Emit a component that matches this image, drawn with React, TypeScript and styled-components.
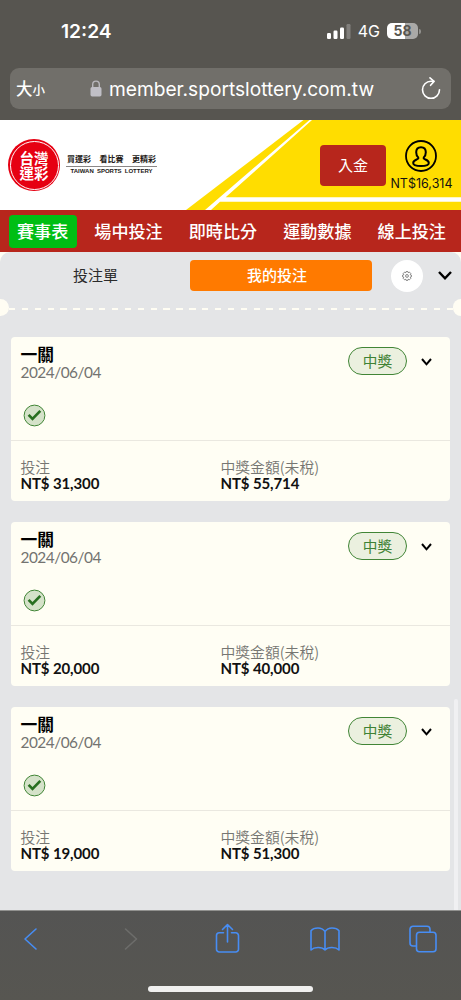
import React from 'react';
import styled, { createGlobalStyle } from 'styled-components';

const CJK = '"Noto Sans CJK TC", sans-serif';

const GlobalStyle = createGlobalStyle`
  *, *::before, *::after { box-sizing: border-box; }
  body { margin: 0; background: #e4e5e7; }
  button { border: 0; padding: 0; margin: 0; background: none; font: inherit; color: inherit; }
  svg { display: block; flex: none; }
`;

const Screen = styled.div`
  width: 461px;
  height: 1000px;
  display: flex;
  flex-direction: column;
  overflow: hidden;
  background: #e4e5e7;
  font-family: Lato, ${CJK};
`;

const BrowserTop = styled.header`
  height: 120px;
  flex: none;
  background: #575550;
  color: #fff;
  padding: 0 10px;
`;

const StatusBar = styled.div`
  height: 68px;
  display: flex;
  align-items: center;
  padding: 0 30px 6px 51px;
  font-family: Inter, sans-serif;
`;

const Clock = styled.span`
  flex: 1;
  font-size: 19.2px;
  font-weight: 600;
`;

const Network = styled.span`
  font-size: 16px;
  margin: 0 7px 0 7px;
`;

const Battery = styled.span`
  width: 31px;
  height: 16px;
  border-radius: 5px;
  background: linear-gradient(90deg, #fff 58%, #aaa9a7 58%);
  color: #575550;
  font-size: 14px;
  font-weight: 700;
  line-height: 16px;
  text-align: center;
`;

const BatteryTip = styled.i`
  width: 2px;
  height: 5px;
  margin-left: 1px;
  border-radius: 0 2px 2px 0;
  background: #92918e;
`;

const AddressBar = styled.div`
  height: 41px;
  border-radius: 9px;
  background: #716f6a;
  display: flex;
  align-items: center;
  padding: 0 10px 0 6px;
`;

const TextSize = styled.span`
  width: 74px;
  font-family: ${CJK};
  font-size: 16.5px;
  font-weight: 500;
  line-height: 24px;
  small { font-size: 12.5px; }
`;

const Url = styled.span`
  flex: 1;
  margin-left: 7px;
  font-family: Inter, sans-serif;
  font-size: 19.15px;
  line-height: 24px;
  white-space: nowrap;
`;

const SiteHeader = styled.div`
  height: 90px;
  flex: none;
  background: #fff;
  position: relative;
`;

const HeaderArt = styled.svg`
  position: absolute;
  inset: 0;
`;

const HeaderRow = styled.div`
  position: relative;
  height: 90px;
  display: flex;
  align-items: center;
  padding: 0 8px;
`;

const Seal = styled.div`
  width: 52px;
  height: 52px;
  border-radius: 50%;
  background: #e60012;
  padding: 1.5px;
`;

const SealRing = styled.div`
  height: 100%;
  border: 1px solid #fff;
  border-radius: 50%;
  display: flex;
  flex-direction: column;
  align-items: center;
  justify-content: center;
  color: #fff;
  font-family: ${CJK};
  font-weight: 700;
  font-size: 14.5px;
  line-height: 15px;
  padding-bottom: 1px;
`;

const Tagline = styled.div`
  width: 91px;
  margin-left: 6px;
  color: #221815;
  white-space: nowrap;
`;

const Slogan = styled.div`
  height: 13px;
  display: flex;
  justify-content: space-between;
  padding: 0 1px 0 1px;
  border-bottom: 1px solid #8b8786;
  font-family: ${CJK};
  font-weight: 700;
  font-size: 8px;
  line-height: 9px;
`;

const SloganEn = styled.div`
  font-family: "Liberation Sans", sans-serif;
  font-size: 6px;
  font-weight: 700;
  line-height: 9px;
  text-align: center;
  word-spacing: 1.5px;
`;

const Deposit = styled.button`
  width: 66px;
  height: 41px;
  margin-left: auto;
  border-radius: 4px;
  background: #b7261c;
  color: #fff;
  font-family: ${CJK};
  font-size: 15px;
  line-height: 22px;
`;

const Account = styled.div`
  width: 63px;
  margin-left: 4px;
  display: flex;
  flex-direction: column;
  align-items: center;
  font-family: Inter, sans-serif;
  font-size: 12.5px;
  line-height: 15px;
  color: #111;
  white-space: nowrap;
  gap: 4px;
  svg { margin-right: 2px; }
`;

const Nav = styled.nav`
  height: 42px;
  flex: none;
  background: #b7261c;
  display: flex;
  align-items: center;
  justify-content: space-between;
  padding: 0 6px 0 9px;
`;

const NavItem = styled.button<{ $active?: boolean }>`
  height: 33px;
  padding: 0 9px 1px 8px;
  border-radius: 4px;
  background: ${p => (p.$active ? '#00be14' : 'transparent')};
  color: #fff;
  font-family: ${CJK};
  font-size: 17.1px;
  font-weight: 500;
  line-height: 32px;
`;

const Panel = styled.main`
  flex: 1;
  background: #fffdf3;
  position: relative;
`;

const PanelBody = styled.div`
  height: 100%;
  border-radius: 10px 10px 0 0;
  background: #e4e5e7;
  display: flex;
  flex-direction: column;
`;

const Tabs = styled.div`
  height: 47px;
  display: flex;
  align-items: center;
`;

const Tab = styled.button<{ $active?: boolean }>`
  flex: none;
  width: ${p => (p.$active ? 182 : 190)}px;
  height: 31px;
  border-radius: 4px;
  background: ${p => (p.$active ? '#ff7a00' : 'transparent')};
  color: ${p => (p.$active ? '#fff' : '#2b2b2b')};
  font-family: ${CJK};
  font-size: 15px;
  font-weight: ${p => (p.$active ? 500 : 400)};
  line-height: 28px;
  padding-bottom: 1px;
  padding-left: ${p => (p.$active ? '0' : '1px')};
  padding-right: ${p => (p.$active ? '8px' : '0')};
`;

const Settings = styled.button`
  flex: none;
  width: 32px;
  height: 32px;
  margin: 0 15px 0 19px;
  border-radius: 50%;
  background: #fff;
  display: grid;
  place-items: center;
`;

const Perforation = styled.div`
  height: 17px;
  display: flex;
  align-items: center;
  justify-content: space-between;
  overflow: hidden;
`;

const Notch = styled.i<{ $right?: boolean }>`
  width: 8.5px;
  height: 17px;
  background: #fffdf3;
  border-radius: ${p => (p.$right ? '9px 0 0 9px' : '0 9px 9px 0')};
`;

const Dashes = styled.div`
  flex: 1;
  height: 2px;
  margin-top: 3px;
  background: repeating-linear-gradient(90deg, #fffdf3 0 6.4px, transparent 6.4px 12.87px);
`;

const Tickets = styled.div`
  display: flex;
  flex-direction: column;
  gap: 21px;
  padding: 21px 11px 0;
`;

const Ticket = styled.article`
  height: 164px;
  border-radius: 4px;
  background: #fffef4;
  display: flex;
  flex-direction: column;
`;

const TicketTop = styled.div`
  height: 104px;
  border-bottom: 1px solid #eae8e0;
  padding: 8px 18px 0 9.5px;
  display: flex;
  align-items: flex-start;
`;

const TicketInfo = styled.div`
  flex: 1;
`;

const TicketTitle = styled.h2`
  margin: 0;
  font-family: ${CJK};
  font-size: 16.8px;
  font-weight: 700;
  line-height: 18px;
  color: #000;
`;

const TicketDate = styled.div`
  font-size: 15.4px;
  line-height: 18px;
  letter-spacing: -0.5px;
  color: #737370;
`;

const CheckSlot = styled.div`
  padding: 23px 0 0 2.5px;
`;

const Badge = styled.span`
  width: 59px;
  height: 28px;
  border: 1px solid #418536;
  border-radius: 14px;
  background: #ebf0df;
  color: #3f8235;
  font-family: ${CJK};
  font-size: 14.7px;
  line-height: 25px;
  text-align: center;
  margin: 1.5px 14px 0 0;
`;

const ChevronSlot = styled.span`
  margin-top: 13px;
`;

const Amounts = styled.div`
  display: grid;
  grid-template-columns: 200px 1fr;
  padding: 18px 0 0 9.5px;
`;

const AmountLabel = styled.div`
  font-family: ${CJK};
  font-size: 14.8px;
  font-weight: 350;
  line-height: 16px;
  color: #767672;
  white-space: nowrap;
`;

const AmountValue = styled.div`
  font-size: 15px;
  font-weight: 700;
  letter-spacing: -0.12px;
  line-height: 16px;
  color: #111;
  white-space: nowrap;
`;

const Scrollbar = styled.i`
  position: absolute;
  right: 3px;
  top: 447px;
  bottom: 0;
  width: 4px;
  border-radius: 2px 2px 0 0;
  background: #f0f0f2;
`;

const BrowserBottom = styled.footer`
  height: 90px;
  flex: none;
  border-top: 1px solid #91918f;
  background: linear-gradient(#545453, #575651);
  color: #478df4;
  display: flex;
  flex-direction: column;
  align-items: center;
`;

const Toolbar = styled.div`
  width: 100%;
  height: 75px;
  display: flex;
  align-items: flex-start;
  justify-content: space-between;
  padding: 12px 24px 0 15px;
`;

const ToolIcon = styled.svg.attrs({ width: 30, height: 32, viewBox: '0 0 30 32' })`
  fill: none;
  stroke: currentColor;
  stroke-width: 1.6;
  stroke-linejoin: round;
  stroke-linecap: round;
  overflow: visible;
`;

const DisabledIcon = styled(ToolIcon)`
  color: #6d6d6b;
`;

const HomeIndicator = styled.i`
  width: 165px;
  height: 6px;
  border-radius: 3px;
  background: #f0f0ef;
`;

const tickets = [
  { stake: 'NT$ 31,300', win: 'NT$ 55,714' },
  { stake: 'NT$ 20,000', win: 'NT$ 40,000' },
  { stake: 'NT$ 19,000', win: 'NT$ 51,300' },
];

const SignalIcon = () => (
  <svg width="24" height="15" viewBox="0 0 24 15" fill="#fff">
    <rect x="0" y="9" width="4" height="6" rx="1.2" />
    <rect x="6.5" y="6.5" width="4" height="8.5" rx="1.2" />
    <rect x="13" y="3.5" width="4" height="11.5" rx="1.2" />
    <rect x="19.5" y="0" width="4" height="15" rx="1.2" opacity=".25" />
  </svg>
);

const LockIcon = () => (
  <svg width="12" height="17" viewBox="0 0 12 17">
    <path d="M2.7 8V4.4a3.3 3.3 0 0 1 6.6 0V8" fill="none" stroke="#b9b8bd" strokeWidth="1.4" />
    <rect x=".5" y="7" width="11" height="9.5" rx="1.7" fill="#c0bfc6" />
  </svg>
);

const ReloadIcon = () => (
  <svg width="20" height="23" viewBox="0 0 20 23" fill="none" stroke="#fff" strokeWidth="1.6" strokeLinecap="round" strokeLinejoin="round">
    <path d="M12.8 4.3H10a8.5 8.5 0 1 0 8.5 8.5" />
    <path d="M9 .9l4 3.5L9.6 8.3" />
  </svg>
);

const PersonIcon = () => (
  <svg width="32" height="32" viewBox="0 0 32 32" fill="none" stroke="#000" strokeWidth="2">
    <circle cx="16" cy="16" r="15" strokeWidth="1.8" />
    <path d="M16 7.2c-3 0-4.8 2-4.8 5 0 2.4.8 4 2 5.2 .6 1.1-.3 1.6-1.6 2.1-2 .8-3.4 1.7-3.4 3.4 0 1.8 3 3.1 7.8 3.1s7.8-1.3 7.8-3.1c0-1.7-1.4-2.6-3.4-3.4-1.3-.5-2.2-1-1.6-2.1 1.2-1.2 2-2.8 2-5.2 0-3-1.8-5-4.8-5z" />
  </svg>
);

const GearIcon = () => (
  <svg width="10" height="10" viewBox="0 0 10 10" fill="none" stroke="#555" strokeWidth=".7" strokeLinejoin="round">
    <path d="M4.2.5h1.6l.4 1.2 1.2-.6 1.4 1.4-.6 1.2 1.2.4v1.7l-1.2.4.6 1.2-1.4 1.4-1.2-.6-.4 1.2H4.2l-.4-1.2-1.2.6-1.4-1.4.6-1.2-1.2-.4V4.1l1.2-.4-.6-1.2 1.4-1.4 1.2.6z" />
    <circle cx="5" cy="4.95" r="1.4" />
  </svg>
);

const Chevron = ({ width, height, stroke }: { width: number; height: number; stroke: number }) => (
  <svg width={width} height={height} viewBox={`0 0 ${width} ${height}`} fill="none" stroke="#000" strokeWidth={stroke}>
    <path d={`M1 1L${width / 2} ${height - 1.7}L${width - 1} 1`} />
  </svg>
);

const CheckIcon = () => (
  <svg width="23" height="23" viewBox="0 0 23 23">
    <circle cx="11.5" cy="11.5" r="10.4" fill="#d5e2c9" stroke="#418536" strokeWidth="1" />
    <path d="M5.600 10.900l3.900 4 7.800-8" fill="none" stroke="#286f20" strokeWidth="2.7" />
  </svg>
);

const TicketCard = ({ stake, win }: { stake: string; win: string }) => (
  <Ticket>
    <TicketTop>
      <TicketInfo>
        <TicketTitle>一關</TicketTitle>
        <TicketDate>2024/06/04</TicketDate>
        <CheckSlot><CheckIcon /></CheckSlot>
      </TicketInfo>
      <Badge>中獎</Badge>
      <ChevronSlot><Chevron width={11} height={8} stroke={2} /></ChevronSlot>
    </TicketTop>
    <Amounts>
      <div>
        <AmountLabel>投注</AmountLabel>
        <AmountValue>{stake}</AmountValue>
      </div>
      <div>
        <AmountLabel>中獎金額(未稅)</AmountLabel>
        <AmountValue>{win}</AmountValue>
      </div>
    </Amounts>
  </Ticket>
);

export default function App() {
  return (
    <Screen>
      <GlobalStyle />
      <BrowserTop>
        <StatusBar>
          <Clock>12:24</Clock>
          <SignalIcon />
          <Network>4G</Network>
          <Battery>58</Battery>
          <BatteryTip />
        </StatusBar>
        <AddressBar>
          <TextSize>大<small>小</small></TextSize>
          <LockIcon />
          <Url>member.sportslottery.com.tw</Url>
          <ReloadIcon />
        </AddressBar>
      </BrowserTop>

      <SiteHeader>
        <HeaderArt width="461" height="90" viewBox="0 0 461 90">
          <path d="M303.5 0H461V90H186z" fill="#ffdd00" />
          <path d="M309.5 0L205 90H211L220 81.7H461V77.3H225.7L312 0z" fill="#fff" />
        </HeaderArt>
        <HeaderRow>
          <Seal>
            <SealRing><span>台灣</span><span>運彩</span></SealRing>
          </Seal>
          <Tagline>
            <Slogan><span>買運彩</span><span>看比賽</span><span>更精彩</span></Slogan>
            <SloganEn>TAIWAN SPORTS LOTTERY</SloganEn>
          </Tagline>
          <Deposit>入金</Deposit>
          <Account>
            <PersonIcon />
            <span>NT$16,314</span>
          </Account>
        </HeaderRow>
      </SiteHeader>

      <Nav>
        <NavItem $active>賽事表</NavItem>
        <NavItem>場中投注</NavItem>
        <NavItem>即時比分</NavItem>
        <NavItem>運動數據</NavItem>
        <NavItem>線上投注</NavItem>
      </Nav>

      <Panel>
        <PanelBody>
          <Tabs>
            <Tab>投注單</Tab>
            <Tab $active>我的投注</Tab>
            <Settings><GearIcon /></Settings>
            <Chevron width={14} height={9} stroke={2.4} />
          </Tabs>
          <Perforation>
            <Notch />
            <Dashes />
            <Notch $right />
          </Perforation>
          <Tickets>
            {tickets.map(t => <TicketCard key={t.stake} {...t} />)}
          </Tickets>
        </PanelBody>
        <Scrollbar />
      </Panel>

      <BrowserBottom>
        <Toolbar>
          <ToolIcon><path d="M21 6L10 16l11 10" /></ToolIcon>
          <DisabledIcon><path d="M12.5 6l11 10-11 10" /></DisabledIcon>
          <ToolIcon><path d="M12.5 9.8H8.3a2.8 2.8 0 0 0-2.8 2.8v13.6A2.8 2.8 0 0 0 8.3 29h16.4a2.8 2.8 0 0 0 2.8-2.8V12.6a2.8 2.8 0 0 0-2.8-2.8H20.5M16.5 19V1.5M11.5 6.5l5-5 5 5" /></ToolIcon>
          <ToolIcon><path d="M16 8.500C14 5.800 11.500 5 9 5S3.500 5.800 2 7.800V27c3-3 11-3.500 14 0 3-3.500 11-3 14 0V7.800C28.500 5.800 26 5 23 5S18 5.800 16 8.500V27" /></ToolIcon>
          <ToolIcon><path d="M9 23H6a3 3 0 0 1-3-3V6.300a3 3 0 0 1 3-3h14a3 3 0 0 1 3 3V9" /><rect x="9.500" y="9.300" width="19.500" height="19.400" rx="3" /></ToolIcon>
        </Toolbar>
        <HomeIndicator />
      </BrowserBottom>
    </Screen>
  );
}
